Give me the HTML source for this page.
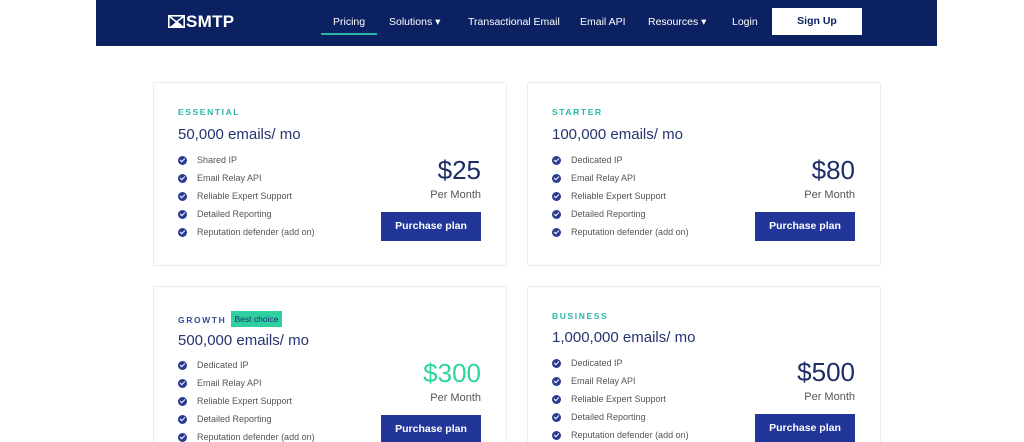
<!DOCTYPE html>
<html><head><meta charset="utf-8"><style>
*{margin:0;padding:0;box-sizing:border-box}
html,body{width:1024px;height:442px;overflow:hidden}
body{background:#fff;font-family:"Liberation Sans",Arial,sans-serif;position:relative}
.nav{position:absolute;left:96px;top:0;width:841px;height:46px;background:#0c2161}
.nav span{position:absolute;top:16px;color:#fff;font-size:10.5px}
.logo{position:absolute;left:72px;top:12px;color:#fff;font-weight:bold;font-size:17px;letter-spacing:0.3px}
.card{position:absolute;width:354px;background:#fff;border:1px solid #ececec;border-radius:2px}
.a{position:absolute;font-size:8.5px;font-weight:bold;letter-spacing:1.6px;color:#2bb5a8}
.t{position:absolute;font-size:15px;color:#25346f}
.li{position:absolute;left:24px;font-size:9px;color:#555}
.li:before{content:"";position:absolute;left:0;top:1px;width:9px;height:9px;border-radius:50%;background:#2a3b92}
.li i{position:absolute;left:2px;top:3px;width:5px;height:3px;border-left:1.5px solid #fff;border-bottom:1.5px solid #fff;transform:rotate(-45deg)}
.li b{font-weight:normal;position:absolute;left:19px;white-space:nowrap}
.p{position:absolute;right:25px;font-size:26px;color:#1d2d66;text-align:right}
.pm{position:absolute;right:25px;font-size:11px;color:#555}
.btn{position:absolute;right:25px;width:100px;height:29px;background:#22369a;color:#fff;font-size:10.5px;font-weight:bold;text-align:center;line-height:29px}
</style></head><body>
<div class="nav">
<div class="logo"><svg width="17" height="13" viewBox="0 0 17 13" style="vertical-align:-1px;margin-right:1px"><rect x="0.8" y="0.8" width="15.4" height="11.4" fill="none" stroke="#fff" stroke-width="1.6"/><path d="M1 1L8.5 7L16 1" fill="none" stroke="#fff" stroke-width="1.6"/><path d="M2 12L9 6L16 12Z" fill="#fff"/></svg>SMTP</div>
<span style="left:237px">Pricing</span>
<div style="position:absolute;left:225px;top:33px;width:56px;height:2px;background:#2bb5a8"></div>
<span style="left:293px">Solutions &#9662;</span>
<span style="left:372px">Transactional Email</span>
<span style="left:484px">Email API</span>
<span style="left:552px">Resources &#9662;</span>
<span style="left:636px">Login</span>
<div style="position:absolute;left:676px;top:8px;width:90px;height:27px;background:#fff;color:#0c2161;font-size:10.5px;font-weight:bold;text-align:center;line-height:27px">Sign Up</div>
</div>

<div class="card" style="left:153px;top:82px;height:184px">
<div class="a" style="left:24px;top:24px">ESSENTIAL</div>
<div class="t" style="left:24px;top:43px">50,000 emails/ mo</div>
<div class="li" style="top:72px"><i></i><b>Shared IP</b></div>
<div class="li" style="top:90px"><i></i><b>Email Relay API</b></div>
<div class="li" style="top:108px"><i></i><b>Reliable Expert Support</b></div>
<div class="li" style="top:126px"><i></i><b>Detailed Reporting</b></div>
<div class="li" style="top:144px"><i></i><b>Reputation defender (add on)</b></div>
<div class="p" style="top:72px">$25</div>
<div class="pm" style="top:106px">Per Month</div>
<div class="btn" style="top:129px">Purchase plan</div>
</div>

<div class="card" style="left:527px;top:82px;height:184px">
<div class="a" style="left:24px;top:24px">STARTER</div>
<div class="t" style="left:24px;top:43px">100,000 emails/ mo</div>
<div class="li" style="top:72px"><i></i><b>Dedicated IP</b></div>
<div class="li" style="top:90px"><i></i><b>Email Relay API</b></div>
<div class="li" style="top:108px"><i></i><b>Reliable Expert Support</b></div>
<div class="li" style="top:126px"><i></i><b>Detailed Reporting</b></div>
<div class="li" style="top:144px"><i></i><b>Reputation defender (add on)</b></div>
<div class="p" style="top:72px">$80</div>
<div class="pm" style="top:106px">Per Month</div>
<div class="btn" style="top:129px">Purchase plan</div>
</div>

<div class="card" style="left:153px;top:286px;height:170px">
<div class="a" style="left:24px;top:28px;color:#3a4a9a">GROWTH</div>
<div style="position:absolute;left:77px;top:24px;width:51px;height:16px;background:#2ecfa0;color:#1d2d66;font-size:8.5px;line-height:16px;text-align:center">Best choice</div>
<div class="t" style="left:24px;top:45px">500,000 emails/ mo</div>
<div class="li" style="top:73px"><i></i><b>Dedicated IP</b></div>
<div class="li" style="top:91px"><i></i><b>Email Relay API</b></div>
<div class="li" style="top:109px"><i></i><b>Reliable Expert Support</b></div>
<div class="li" style="top:127px"><i></i><b>Detailed Reporting</b></div>
<div class="li" style="top:145px"><i></i><b>Reputation defender (add on)</b></div>
<div class="p" style="top:71px;color:#2ed3a0">$300</div>
<div class="pm" style="top:105px">Per Month</div>
<div class="btn" style="top:128px">Purchase plan</div>
</div>

<div class="card" style="left:527px;top:286px;height:170px">
<div class="a" style="left:24px;top:24px">BUSINESS</div>
<div class="t" style="left:24px;top:42px">1,000,000 emails/ mo</div>
<div class="li" style="top:71px"><i></i><b>Dedicated IP</b></div>
<div class="li" style="top:89px"><i></i><b>Email Relay API</b></div>
<div class="li" style="top:107px"><i></i><b>Reliable Expert Support</b></div>
<div class="li" style="top:125px"><i></i><b>Detailed Reporting</b></div>
<div class="li" style="top:143px"><i></i><b>Reputation defender (add on)</b></div>
<div class="p" style="top:70px">$500</div>
<div class="pm" style="top:104px">Per Month</div>
<div class="btn" style="top:127px">Purchase plan</div>
</div>
</body></html>
